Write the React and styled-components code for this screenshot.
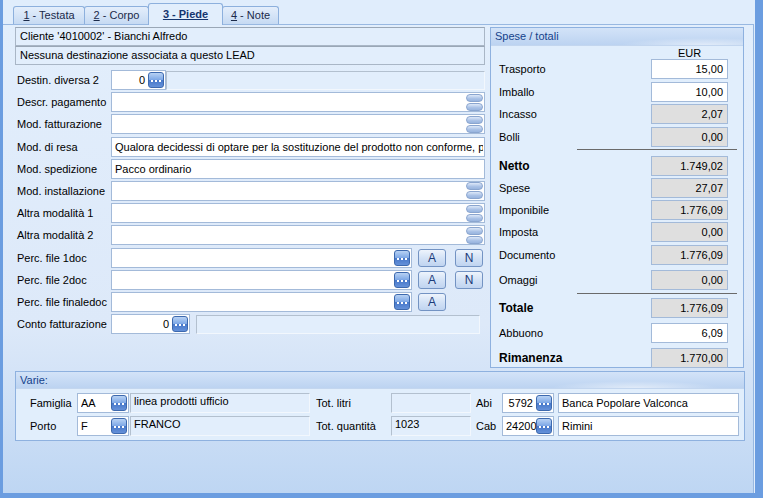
import React from 'react';
import styled, { createGlobalStyle, css } from 'styled-components';

const GlobalStyle = createGlobalStyle`
  html, body {
    margin: 0;
    padding: 0;
  }
  body {
    background: #dfecfb;
    font-family: "Liberation Sans", Arial, sans-serif;
    font-size: 11px;
    color: #000;
  }
`;

const Window = styled.div`
  box-sizing: border-box;
  width: 763px;
  height: 498px;
  display: flex;
  flex-direction: column;
  background: #e0edfc;
  border-left: 3px solid #6b9de0;
  border-right: 8px solid #6b9de0;
  border-bottom: 5px solid #6b9de0;
  padding-right: 1px;
  overflow: hidden;
`;

const TabBar = styled.div`
  display: flex;
  align-items: flex-end;
  height: 24px;
  padding-left: 10px;
  flex: none;
`;

const Tab = styled.div`
  box-sizing: border-box;
  position: relative;
  width: ${p => p.$w}px;
  height: 18px;
  margin-right: -1px;
  padding-top: 2px;
  text-align: center;
  border: 1px solid #8db0dd;
  border-bottom: none;
  border-radius: 3px 3px 0 0;
  color: #1b2a4a;
  background: linear-gradient(#e4eefb, #c6daf3);
  ${p => p.$active && css`
    height: 22px;
    margin-bottom: -1px;
    padding-top: 4px;
    z-index: 1;
    background: #e2eefc;
    font-weight: bold;
    color: #15356e;
    text-decoration: underline;
  `}
`;

const Panel = styled.div`
  flex: 1;
  border-top: 1px solid #98b8e1;
  border-right: 1px solid #98b8e1;
  background: linear-gradient(#e2eefc 0%, #dde9f9 64%, #bed6f3 100%);
  padding: 2px 0 0 12px;
`;

const TopArea = styled.div`
  display: flex;
  gap: 5px;
`;

const LeftCol = styled.div`
  width: 470px;
  display: flex;
  flex-direction: column;
`;

const InfoBox = styled.div`
  box-sizing: border-box;
  height: 19px;
  line-height: 17px;
  padding-left: 4px;
  border: 1px solid #a9b6c6;
  border-top-color: #9aa7b6;
  background: #e2eefc;
  white-space: nowrap;
  overflow: hidden;
`;

const FormRows = styled.div`
  display: flex;
  flex-direction: column;
  gap: 2.2px;
  margin-top: 5px;
`;

const Row = styled.div`
  display: flex;
  align-items: center;
  height: 20px;
`;

const Label = styled.div`
  width: ${p => p.$w || 96}px;
  padding-left: ${p => p.$pl ?? 2}px;
  box-sizing: border-box;
  flex: none;
  white-space: nowrap;
  font-weight: ${p => (p.$bold ? 'bold' : 'normal')};
  font-size: ${p => (p.$bold ? '12px' : '11px')};
  margin-left: ${p => p.$ml || 0}px;
`;

const Field = styled.div`
  box-sizing: border-box;
  width: ${p => p.$w}px;
  height: ${p => p.$h || 20}px;
  flex: none;
  display: flex;
  align-items: center;
  border: 1px solid #a3bad9;
  background: ${p => (p.$gray ? '#dfdfdf' : '#fff')};
  margin-left: ${p => p.$ml || 0}px;
  padding: 0 1px 0 3px;
  overflow: hidden;
`;

const FieldText = styled.span`
  flex: 1;
  min-width: 0;
  overflow: hidden;
  white-space: nowrap;
  text-align: ${p => p.$align || 'left'};
  padding-right: ${p => (p.$align === 'right' ? '3px' : '0')};
`;

const ReadBox = styled.div`
  box-sizing: border-box;
  width: ${p => p.$w}px;
  height: ${p => p.$h || 19}px;
  flex: none;
  margin-left: ${p => p.$ml || 0}px;
  border: 1px solid #b3c0cf;
  border-right-color: #f2f7fd;
  border-bottom-color: #f2f7fd;
  background: #e2eefc;
  padding: 0 3px;
  line-height: 14px;
  white-space: nowrap;
  overflow: hidden;
`;

const DotsButton = styled.span`
  box-sizing: border-box;
  width: 16px;
  height: 16px;
  flex: none;
  display: flex;
  align-items: center;
  justify-content: center;
  gap: 2px;
  padding-top: 2px;
  border: 1px solid #3d69ae;
  border-radius: 3px;
  background: linear-gradient(#b8d2f4 0%, #7ea8e6 48%, #4677c9 52%, #6591d9 100%);
`;

const Dot = styled.i`
  width: 2px;
  height: 2px;
  background: #fff;
`;

const ComboButton = styled.span`
  width: 17px;
  height: 17px;
  flex: none;
  display: flex;
  flex-direction: column;
  gap: 1px;
`;

const ComboBar = styled.span`
  box-sizing: border-box;
  height: 8px;
  border: 1px solid #8aa5cf;
  border-radius: 4px;
  background: linear-gradient(#dde8f8, #a9c1e6 60%, #98b4de);
`;

const SmallButton = styled.div`
  box-sizing: border-box;
  width: 28px;
  height: 18px;
  flex: none;
  margin-left: ${p => p.$ml || 0}px;
  display: flex;
  align-items: center;
  justify-content: center;
  border: 1px solid #7393c3;
  border-radius: 3px;
  background: linear-gradient(#eef4fc, #d3e2f6 50%, #c0d4f0);
  color: #1b3a78;
  font-size: 12px;
`;

const Group = styled.div`
  box-sizing: border-box;
  width: ${p => p.$w}px;
  height: ${p => p.$h}px;
  margin-top: ${p => p.$mt || 0}px;
  border: 1px solid #8eb1df;
  background: #e1eefc;
  display: flex;
  flex-direction: column;
`;

const GroupHeader = styled.div`
  height: ${p => p.$h || 17}px;
  line-height: ${p => p.$h || 17}px;
  padding-left: 4px;
  color: #15428b;
  flex: none;
  background:
    radial-gradient(ellipse 120px 10px at 85% 100%, rgba(255, 255, 255, 0.55), rgba(255, 255, 255, 0) 70%),
    linear-gradient(#d3e3f8, #bcd3f1);
  border-bottom: 1px solid #c3d6ef;
`;

const TotalsBody = styled.div`
  display: flex;
  flex-direction: column;
  padding-left: 8px;
`;

const TotalRow = styled.div`
  display: flex;
  align-items: center;
  height: 20px;
  margin-top: ${p => p.$mt || 0}px;
`;

const EurLabel = styled.div`
  margin: 2px 0 0 152px;
  width: 77px;
  height: 11px;
  line-height: 11px;
  text-align: center;
  font-size: 11px;
`;

const Separator = styled.div`
  height: 1px;
  width: 160px;
  margin: ${p => p.$mt}px 0 0 78px;
  background: #6a6a6a;
`;

const VarieBody = styled.div`
  display: flex;
  flex-direction: column;
  gap: 2.5px;
  padding: 4px 0 0 13px;
`;

const Dots = () => (
  <DotsButton>
    <Dot />
    <Dot />
    <Dot />
  </DotsButton>
);

const Combo = () => (
  <ComboButton>
    <ComboBar />
    <ComboBar />
  </ComboButton>
);

const comboRows = [
  ['Descr. pagamento', ''],
  ['Mod. fatturazione', ''],
  ['Mod. di resa', 'Qualora decidessi di optare per la sostituzione del prodotto non conforme, pc', true],
  ['Mod. spedizione', 'Pacco ordinario', true],
  ['Mod. installazione', ''],
  ['Altra modalità 1', ''],
  ['Altra modalità 2', ''],
];

const fileRows = [
  ['Perc. file 1doc', true],
  ['Perc. file 2doc', true],
  ['Perc. file finaledoc', false],
];

const totals = [
  { label: 'Trasporto', value: '15,00', mt: 0 },
  { label: 'Imballo', value: '10,00', mt: 3 },
  { label: 'Incasso', value: '2,07', gray: true, mt: 2 },
  { label: 'Bolli', value: '0,00', gray: true, mt: 3 },
  { sep: true, mt: 2 },
  { label: 'Netto', value: '1.749,02', gray: true, bold: true, mt: 6 },
  { label: 'Spese', value: '27,07', gray: true, mt: 2 },
  { label: 'Imponibile', value: '1.776,09', gray: true, mt: 2 },
  { label: 'Imposta', value: '0,00', gray: true, mt: 2 },
  { label: 'Documento', value: '1.776,09', gray: true, mt: 3 },
  { label: 'Omaggi', value: '0,00', gray: true, mt: 5 },
  { sep: true, mt: 3 },
  { label: 'Totale', value: '1.776,09', gray: true, bold: true, mt: 4 },
  { label: 'Abbuono', value: '6,09', mt: 5 },
  { label: 'Rimanenza', value: '1.770,00', gray: true, bold: true, mt: 5 },
];

const varie = [
  { label: 'Famiglia', code: 'AA', desc: 'linea prodotti ufficio', tot: 'Tot. litri', totVal: '', bank: 'Abi', bankCode: '5792', bankAlign: 'right', bankName: 'Banca Popolare Valconca' },
  { label: 'Porto', code: 'F', desc: 'FRANCO', tot: 'Tot. quantità', totVal: '1023', bank: 'Cab', bankCode: '24200', bankAlign: 'left', bankName: 'Rimini' },
];

const App = () => {
  return (
    <>
      <GlobalStyle />
      <Window>
        <TabBar>
          <Tab $w={72}><u>1</u> - Testata</Tab>
          <Tab $w={65}><u>2</u> - Corpo</Tab>
          <Tab $w={75} $active>3 - Piede</Tab>
          <Tab $w={57}><u>4</u> - Note</Tab>
        </TabBar>
        <Panel>
          <TopArea>
            <LeftCol>
              <InfoBox>Cliente '4010002' - Bianchi Alfredo</InfoBox>
              <InfoBox>Nessuna destinazione associata a questo LEAD</InfoBox>
              <FormRows>
                <Row>
                  <Label>Destin. diversa 2</Label>
                  <Field $w={55}>
                    <FieldText $align="right">0</FieldText>
                    <Dots />
                  </Field>
                  <ReadBox $w={319} />
                </Row>
                {comboRows.map(([label, value, noCombo]) => (
                  <Row key={label}>
                    <Label>{label}</Label>
                    <Field $w={374}>
                      <FieldText>{value}</FieldText>
                      {!noCombo && <Combo />}
                    </Field>
                  </Row>
                ))}
                {fileRows.map(([label, hasN]) => (
                  <Row key={label}>
                    <Label>{label}</Label>
                    <Field $w={301}>
                      <FieldText />
                      <Dots />
                    </Field>
                    <SmallButton $ml={6}>A</SmallButton>
                    {hasN && <SmallButton $ml={9}>N</SmallButton>}
                  </Row>
                ))}
                <Row>
                  <Label>Conto fatturazione</Label>
                  <Field $w={79}>
                    <FieldText $align="right">0</FieldText>
                    <Dots />
                  </Field>
                  <ReadBox $w={284} $ml={6} />
                </Row>
              </FormRows>
            </LeftCol>

            <Group $w={254} $h={341}>
              <GroupHeader>Spese / totali</GroupHeader>
              <TotalsBody>
                <EurLabel>EUR</EurLabel>
                {totals.map((t, i) =>
                  t.sep ? (
                    <Separator key={i} $mt={t.mt} />
                  ) : (
                    <TotalRow key={t.label} $mt={t.mt}>
                      <Label $w={152} $pl={0} $bold={t.bold}>{t.label}</Label>
                      <Field $w={77} $gray={t.gray}>
                        <FieldText $align="right">{t.value}</FieldText>
                      </Field>
                    </TotalRow>
                  )
                )}
              </TotalsBody>
            </Group>
          </TopArea>

          <Group $w={730} $h={70} $mt={3}>
            <GroupHeader $h={16}>Varie:</GroupHeader>
            <VarieBody>
              {varie.map(v => (
                <Row key={v.label}>
                  <Label $w={48} $pl={1}>{v.label}</Label>
                  <Field $w={52}>
                    <FieldText>{v.code}</FieldText>
                    <Dots />
                  </Field>
                  <ReadBox $w={180} $h={20} $ml={1}>{v.desc}</ReadBox>
                  <Label $w={81} $pl={6}>{v.tot}</Label>
                  <ReadBox $w={80} $h={20}>{v.totVal}</ReadBox>
                  <Label $w={31} $pl={5}>{v.bank}</Label>
                  <Field $w={52}>
                    <FieldText $align={v.bankAlign}>{v.bankCode}</FieldText>
                    <Dots />
                  </Field>
                  <Field $w={181} $ml={4}>
                    <FieldText>{v.bankName}</FieldText>
                  </Field>
                </Row>
              ))}
            </VarieBody>
          </Group>
        </Panel>
      </Window>
    </>
  );
};

export default App;
